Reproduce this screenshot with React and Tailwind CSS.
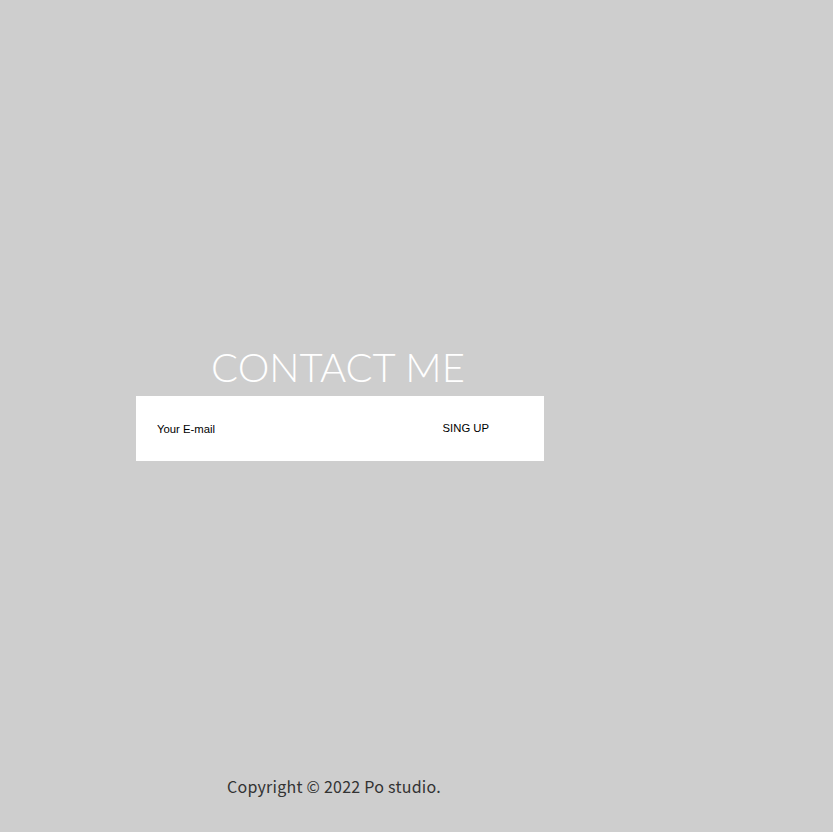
export default function App() {
  return (
    <div className="min-h-[832px] w-full bg-[#cecece] flex flex-col">
      <section className="pt-[343px] pl-[134px]">
        <div className="w-[408px] ml-[2px]">
          <h2 className="text-center -ml-[4px] text-white text-[40px] leading-[48px] font-light font-['Lato','Liberation_Sans',sans-serif]">
            CONTACT ME
          </h2>
          <form className="mt-[5px] h-[65px] bg-white flex items-center justify-between pl-[21px] pr-[55px]">
            <input
              type="email"
              placeholder="Your E-mail"
              className="w-[220px] bg-transparent outline-none text-[11.3px] mt-[2px] text-black placeholder:text-[#000] font-['Liberation_Sans',sans-serif]"
            />
            <button type="button" className="text-[11.3px] text-black -mt-[1px] font-['Liberation_Sans',sans-serif]">
              SING UP
            </button>
          </form>
        </div>
      </section>
      <footer className="mt-[314px] pl-[227px]">
        <p className="text-[16px] leading-[22px] tracking-[0.25px] text-[#333] font-['Noto_Sans_CJK_SC','Noto_Sans',sans-serif]">
          Copyright © 2022 Po studio.
        </p>
      </footer>
    </div>
  );
}
